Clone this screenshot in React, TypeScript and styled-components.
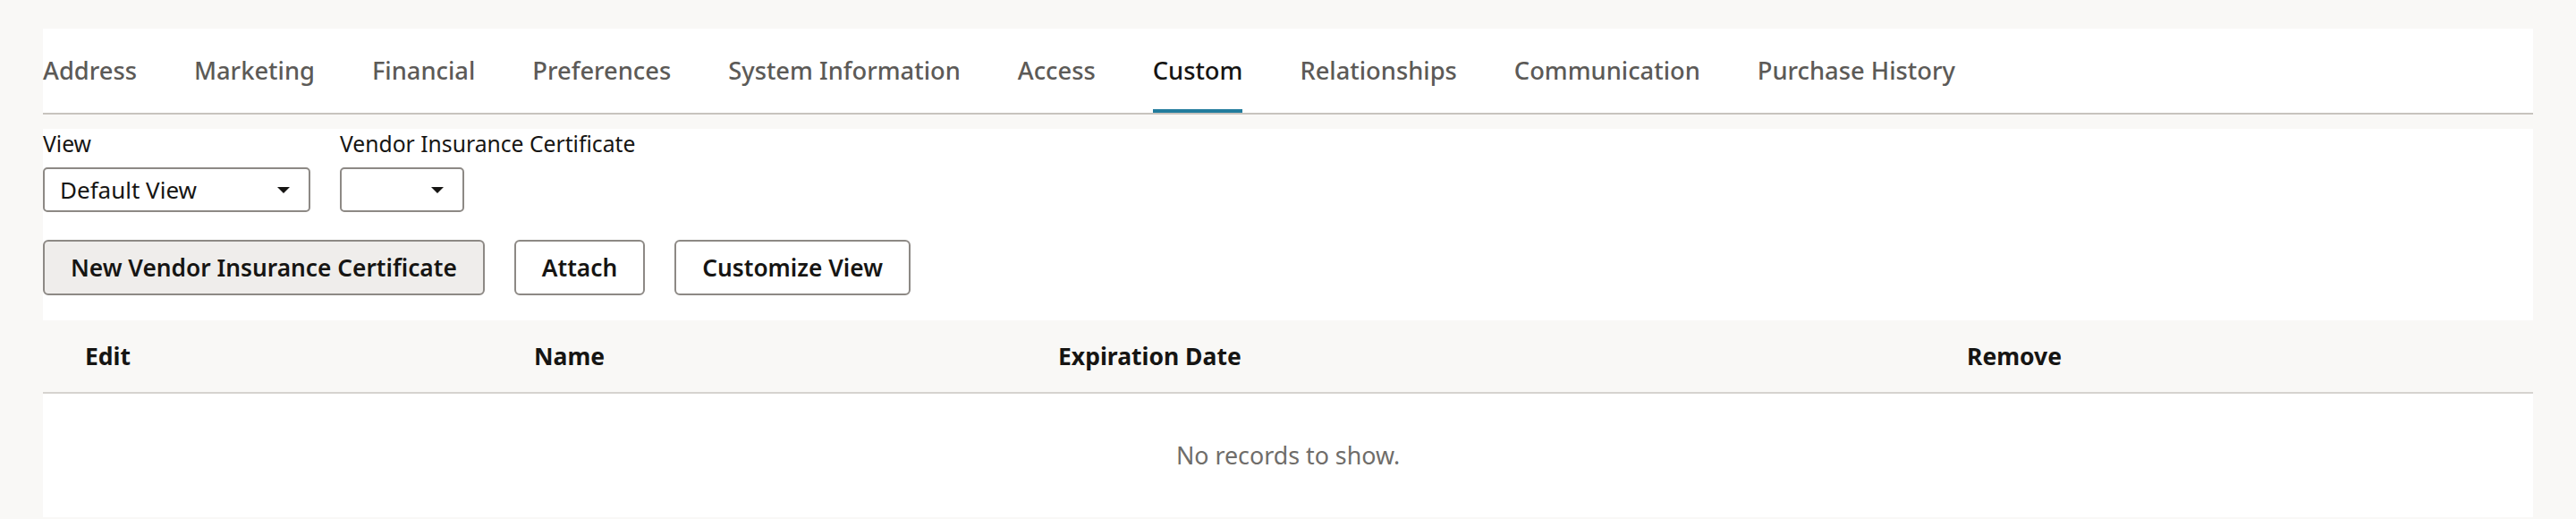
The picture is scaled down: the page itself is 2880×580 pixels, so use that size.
import { useState } from 'react'
import styled, { createGlobalStyle } from 'styled-components'

const GlobalStyle = createGlobalStyle`
  html, body {
    margin: 0;
    padding: 0;
    background: #f9f8f6;
  }

  body {
    font-family: 'Noto Sans', 'Open Sans', sans-serif;
    color: #161513;
  }

  * {
    box-sizing: border-box;
  }
`

const Page = styled.div`
  padding: 32px 48px 0;
  display: flex;
  flex-direction: column;
  gap: 16px;
`

const TabBar = styled.nav`
  display: flex;
  gap: 64px;
  height: 96px;
  background: #ffffff;
  border-bottom: 2px solid #c7c3be;
`

const Tab = styled.button<{ $active: boolean }>`
  display: flex;
  align-items: center;
  height: 94px;
  padding: 0 0 2px;
  background: none;
  border: none;
  border-top: 4px solid transparent;
  border-bottom: 4px solid ${(props) => (props.$active ? '#227c9d' : 'transparent')};
  font-family: inherit;
  font-size: 27.3px;
  font-weight: 500;
  color: ${(props) => (props.$active ? '#161513' : '#5c5a57')};
  cursor: pointer;
  white-space: nowrap;
`

const Panel = styled.section`
  background: #ffffff;
`

const Toolbar = styled.div`
  display: flex;
  flex-direction: column;
  padding-bottom: 28px;
`

const Fields = styled.div`
  display: flex;
  gap: 33px;
`

const Field = styled.label`
  display: flex;
  flex-direction: column;
  gap: 9px;
`

const FieldLabel = styled.span`
  font-size: 24.7px;
  line-height: 34px;
  color: #161513;
`

const Select = styled.div<{ $width: number }>`
  display: flex;
  align-items: center;
  width: ${(props) => props.$width}px;
  height: 50px;
  padding: 0 21px 0 17px;
  border: 2px solid #8d8985;
  border-radius: 5px;
  background: #ffffff;
  font-size: 26px;
  color: #161513;
  cursor: pointer;
`

const Caret = styled.span`
  margin-left: auto;
  width: 0;
  height: 0;
  border-left: 7px solid transparent;
  border-right: 7px solid transparent;
  border-top: 7px solid #161513;
`

const Actions = styled.div`
  display: flex;
  gap: 33px;
  margin-top: 31px;
`

const Button = styled.button<{ $filled?: boolean }>`
  height: 62px;
  padding: 0 29px;
  border: 2px solid #8d8985;
  border-radius: 6px;
  background: ${(props) => (props.$filled ? '#efedeb' : '#ffffff')};
  font-family: inherit;
  font-size: 26.3px;
  font-weight: 600;
  color: #161513;
  cursor: pointer;
  white-space: nowrap;
`

const Table = styled.div`
  display: grid;
  grid-template-columns: 502px 586px 1016px 1fr;
`

const HeadCell = styled.div`
  display: flex;
  align-items: center;
  height: 82px;
  padding-left: 47px;
  background: #f9f8f6;
  border-bottom: 2px solid #d6d3cf;
  font-size: 26.5px;
  font-weight: 700;
  color: #161513;
`

const EmptyRow = styled.div`
  grid-column: 1 / -1;
  padding: 51px 0;
  text-align: center;
  font-size: 26.8px;
  line-height: 36px;
  color: #6f6d6a;
`

const tabs = [
  'Address',
  'Marketing',
  'Financial',
  'Preferences',
  'System Information',
  'Access',
  'Custom',
  'Relationships',
  'Communication',
  'Purchase History',
]

const columns = ['Edit', 'Name', 'Expiration Date', 'Remove']

export default function App() {
  const [activeTab, setActiveTab] = useState('Custom')

  return (
    <>
      <GlobalStyle />
      <Page>
        <TabBar>
          {tabs.map((tab) => (
            <Tab
              key={tab}
              $active={tab === activeTab}
              onClick={() => setActiveTab(tab)}
            >
              {tab}
            </Tab>
          ))}
        </TabBar>

        <Panel>
          <Toolbar>
            <Fields>
              <Field>
                <FieldLabel>View</FieldLabel>
                <Select $width={299}>
                  Default View
                  <Caret />
                </Select>
              </Field>
              <Field>
                <FieldLabel>Vendor Insurance Certificate</FieldLabel>
                <Select $width={139}>
                  <Caret />
                </Select>
              </Field>
            </Fields>
            <Actions>
              <Button $filled>New Vendor Insurance Certificate</Button>
              <Button>Attach</Button>
              <Button>Customize View</Button>
            </Actions>
          </Toolbar>

          <Table>
            {columns.map((col) => (
              <HeadCell key={col}>{col}</HeadCell>
            ))}
            <EmptyRow>No records to show.</EmptyRow>
          </Table>
        </Panel>
      </Page>
    </>
  )
}
